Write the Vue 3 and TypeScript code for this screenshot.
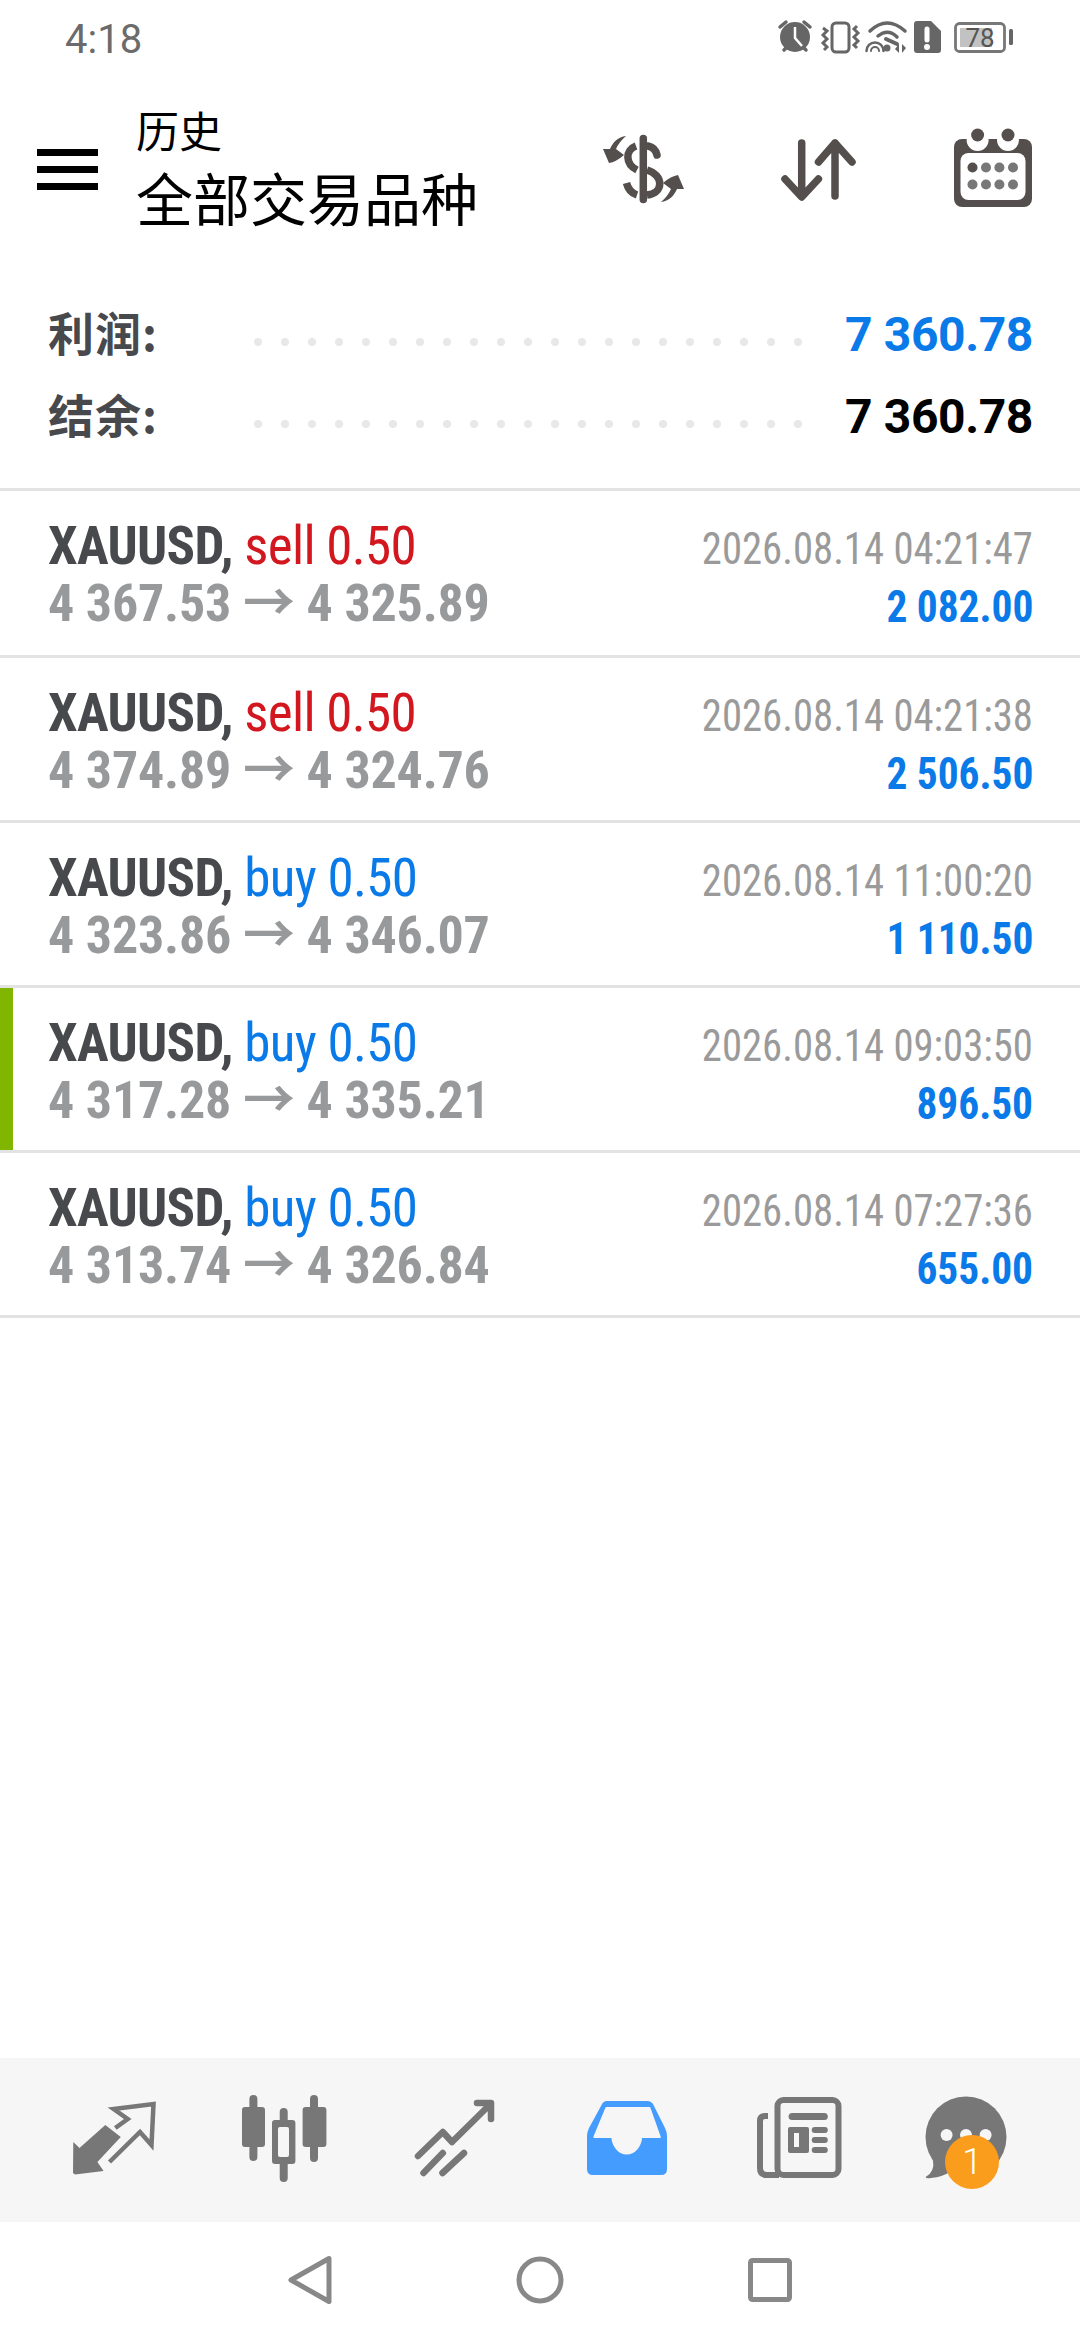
<script setup lang="ts">
interface Trade {
  side: 'sell' | 'buy'
  open: string
  close: string
  time: string
  profit: string
  marked?: boolean
}
const trades: Trade[] = [
  { side: 'sell', open: '4 367.53', close: '4 325.89', time: '2026.08.14 04:21:47', profit: '2 082.00' },
  { side: 'sell', open: '4 374.89', close: '4 324.76', time: '2026.08.14 04:21:38', profit: '2 506.50' },
  { side: 'buy', open: '4 323.86', close: '4 346.07', time: '2026.08.14 11:00:20', profit: '1 110.50' },
  { side: 'buy', open: '4 317.28', close: '4 335.21', time: '2026.08.14 09:03:50', profit: '896.50', marked: true },
  { side: 'buy', open: '4 313.74', close: '4 326.84', time: '2026.08.14 07:27:36', profit: '655.00' }
]
const summary = [
  { label: '利润:', value: '7 360.78', cls: 'blue' },
  { label: '结余:', value: '7 360.78', cls: 'black' }
]
const dots = Array.from({ length: 21 }, (_, i) => i)
</script>

<template>
  <div class="page">
    <div class="status">
      <span class="clock">4:18</span>
      <svg class="status-icons" width="250" height="75" viewBox="770 0 250 75">
        <g fill="#666" stroke="none">
          <circle cx="795" cy="37" r="15" />
          <path d="M780 27l6-5M810 27l-6-5M784 50l3-3M806 50l-3-3" stroke="#666" stroke-width="3.5" stroke-linecap="round" fill="none" />
          <path d="M795 27v11l7 8" stroke="#fff" stroke-width="2.5" fill="none" />
        </g>
        <rect x="832" y="23" width="17" height="29" rx="4" fill="none" stroke="#666" stroke-width="3" />
        <path d="M823 28l4 3-4 4 4 4-4 4 4 4-3 3M857 26l-3 3 4 4-4 4 4 4-4 4 3 3" fill="none" stroke="#666" stroke-width="3" />
        <g fill="none" stroke="#666" stroke-width="3.5" stroke-linecap="round">
          <path d="M870 31q17-16 35 0" />
          <path d="M878 36q10-8 19 1" />
          <path d="M866.500 51a8.500 8.500 0 0 1 17 0" stroke-width="2.500" />
          <path d="M871 51a4 4 0 0 1 8 0" stroke-width="2" />
          <path d="M886 39l11 5" stroke-width="4" />
        </g>
        <circle cx="887" cy="48" r="3.5" fill="#666" />
        <path d="M899 44v9l-4-4zM902 44v9l4-5z" fill="#666" />
        <path d="M917 21h14l10 10v19a3 3 0 0 1-3 3h-21a3 3 0 0 1-3-3v-26a3 3 0 0 1 3-3z" fill="#666" />
        <path d="M927 29v11" stroke="#fff" stroke-width="5" stroke-linecap="round" />
        <circle cx="927" cy="47" r="3" fill="#fff" />
        <rect x="955.5" y="23.5" width="49" height="28" rx="4" fill="#fff" stroke="#777" stroke-width="2.8" />
        <rect x="960" y="28" width="32" height="19" fill="#c2c2c2" />
        <text x="980" y="46.500" class="batt" text-anchor="middle">78</text>
        <rect x="1009" y="29" width="4" height="16" rx="1.5" fill="#666" />
      </svg>
    </div>

    <header class="head">
      <div class="burger"><i></i><i></i><i></i></div>
      <div class="titles">
        <div class="t1">历史</div>
        <div class="t2">全部交易品种</div>
      </div>
      <div class="head-icons">
        <svg width="100" height="130" viewBox="592 105 100 130">
          <path d="M625 136C617 137 612 142 609 149L602 149 608 163Q615 162 623 155L615 149Q618 142 625 136Z" fill="#544f4d" />
          <path d="M660 202C668 201 673 196 676 189L683 189 677 175Q670 176 662 183L670 189Q667 196 660 202Z" fill="#544f4d" />
          <g fill="none" stroke="#544f4d">
            <path d="M642.300 138.500V199.500" stroke-width="7.500" stroke-linecap="round" />
            <path d="M635 146C624 150 624 164 636 170" stroke-width="7.500" />
            <path d="M647 146C652 147 655 151 656 155" stroke-width="7.500" stroke-linecap="round" />
            <path d="M646 170C663 175 663 193 646 195" stroke-width="7.500" />
            <path d="M625.500 183C627 189 630 193 636 195" stroke-width="7.500" />
          </g>
        </svg>
        <svg width="100" height="130" viewBox="767 105 100 130">
          <g fill="none" stroke="#544f4d" stroke-width="7.500" stroke-linecap="round" stroke-linejoin="round">
            <path d="M800.700 143V196M784 179l16.700 18 16.700-18" />
            <path d="M834 196V143M817.500 162L834 143l17 19" />
          </g>
        </svg>
        <svg width="100" height="130" viewBox="941 105 100 130">
          <rect x="952" y="139" width="78" height="68" rx="8" fill="#544f4d" />
          <rect x="958.500" y="153" width="65" height="47" rx="8" fill="#fff" />
          <circle cx="975.600" cy="140" r="11" fill="#fff" />
          <circle cx="1006" cy="140" r="11" fill="#fff" />
          <circle cx="975.600" cy="135" r="6.500" fill="#544f4d" />
          <circle cx="1006" cy="135" r="6.500" fill="#544f4d" />
          <g fill="#777">
            <circle cx="970.500" cy="167.500" r="5" fill="#544f4d" />
            <circle cx="984" cy="167.500" r="5" />
            <circle cx="997.400" cy="167.500" r="5" />
            <circle cx="1011" cy="167.500" r="5" />
            <circle cx="970.500" cy="184.500" r="5" />
            <circle cx="984" cy="184.500" r="5" />
            <circle cx="997.400" cy="184.500" r="5" />
            <circle cx="1011" cy="184.500" r="5" />
          </g>
        </svg>
      </div>
    </header>

    <section class="summary">
      <div v-for="s in summary" :key="s.label + s.cls" class="sum-row">
        <span class="sum-label">{{ s.label }}</span>
        <span class="sum-dots"><i v-for="d in dots" :key="d"></i></span>
        <span class="sum-value" :class="s.cls">{{ s.value }}</span>
      </div>
    </section>

    <ul class="list">
      <li v-for="t in trades" :key="t.time" class="row" :class="{ marked: t.marked }">
        <div class="col-left">
          <div class="line1"><b>XAUUSD,</b> <span :class="t.side">{{ t.side }} 0.50</span></div>
          <div class="line2">{{ t.open }} → {{ t.close }}</div>
        </div>
        <div class="col-right">
          <div class="date">{{ t.time }}</div>
          <div class="profit">{{ t.profit }}</div>
        </div>
      </li>
    </ul>

    <div class="spacer"></div>

    <nav class="tabs">
      <svg width="100" height="164" viewBox="62 2058 100 164">
        <path d="M72.300 2142L78.500 2148 104.300 2125 119.800 2137 96.400 2162 102.600 2171 74 2174.500 72 2173Z" fill="#777" />
        <path d="M114.300 2128L126.700 2119 112.600 2109 152.500 2104 150.500 2145 139 2132 108.500 2162" fill="none" stroke="#777" stroke-width="4.500" />
      </svg>
      <svg width="100" height="164" viewBox="233 2058 100 164">
        <path d="M252.400 2099V2157M282.700 2112V2178M313 2099V2158" stroke="#777" stroke-width="8" stroke-linecap="round" />
        <rect x="241" y="2107" width="23" height="40" rx="3" fill="#777" />
        <rect x="271" y="2120" width="23.400" height="44" rx="3" fill="#777" />
        <rect x="277" y="2127" width="11" height="30" rx="2" fill="#f6f6f6" />
        <rect x="301.600" y="2107" width="23.800" height="40" rx="3" fill="#777" />
      </svg>
      <svg width="100" height="164" viewBox="404 2058 100 164">
        <g fill="none" stroke="#777" stroke-width="6.500" stroke-linecap="round" stroke-linejoin="round">
          <path d="M417 2156L441.800 2132 451 2142 489.500 2104M476 2103H490V2119" />
          <path d="M422.500 2173L441.800 2153M441.500 2173L463 2153" />
        </g>
      </svg>
      <svg width="100" height="164" viewBox="576 2058 100 164">
        <path d="M606 2101H646Q651 2101 653 2106L664 2128Q666 2132 666 2136V2169Q666 2175 660 2175H592Q586 2175 586 2169V2136Q586 2132 588 2128L600 2106Q602 2101 606 2101Z" fill="#459cff" />
        <path d="M605.400 2108H648.500L658.800 2137H640.200A14.500 18 0 0 1 611.300 2137H593.400Z" fill="#f6f6f6" stroke="#f6f6f6" stroke-width="2" stroke-linejoin="round" />
      </svg>
      <svg width="100" height="164" viewBox="747 2058 100 164">
        <rect x="776.500" y="2100" width="61" height="75" rx="6" fill="none" stroke="#777" stroke-width="6" />
        <path d="M767 2116H764Q759 2116 759 2121V2168Q759 2175 766 2175H778" fill="none" stroke="#777" stroke-width="6" />
        <rect x="787.600" y="2113" width="39.200" height="7" rx="3.500" fill="#777" />
        <path fill-rule="evenodd" d="M789 2127H806Q808 2127 808 2129V2151Q808 2153 806 2153H789Q787 2153 787 2151V2129Q787 2127 789 2127ZM793 2133V2147H798V2133Z" fill="#777" />
        <rect x="810.700" y="2127" width="16.100" height="6" rx="3" fill="#777" />
        <rect x="810.700" y="2137" width="16.100" height="6" rx="3" fill="#777" />
        <rect x="810.700" y="2147" width="16.100" height="6" rx="3" fill="#777" />
      </svg>
      <div class="chat">
        <svg width="100" height="164" viewBox="918 2058 100 164">
          <circle cx="965" cy="2137" r="40.500" fill="#777" />
          <path d="M932 2160Q934 2172 924.600 2177Q925 2179 930 2178Q942 2177 950 2171Z" fill="#777" />
          <circle cx="945.600" cy="2135" r="6" fill="#f6f6f6" />
          <circle cx="965" cy="2135" r="6" fill="#f6f6f6" />
          <circle cx="984.600" cy="2135" r="6" fill="#f6f6f6" />
        </svg>
        <span class="badge">1</span>
      </div>
    </nav>

    <div class="sys">
      <svg width="60" height="60" viewBox="0 0 60 60"><path d="M11 30L49 8.500V51.500Z" fill="none" stroke="#888" stroke-width="5" stroke-linejoin="round" /></svg>
      <svg width="60" height="60" viewBox="0 0 60 60"><circle cx="30" cy="30" r="21" fill="none" stroke="#888" stroke-width="5" /></svg>
      <svg width="60" height="60" viewBox="0 0 60 60"><rect x="10.500" y="10.500" width="39" height="39" rx="2" fill="none" stroke="#888" stroke-width="5" /></svg>
    </div>
  </div>
</template>

<style scoped>
.page {
  width: 1080px;
  height: 2340px;
  display: flex;
  flex-direction: column;
  background: #fff;
  font-family: Roboto, "Noto Sans CJK SC", sans-serif;
  overflow: hidden;
}
.status {
  height: 75px;
  display: flex;
  justify-content: space-between;
  align-items: flex-start;
  padding: 0 60px 0 65px;
}
.clock {
  font-family: Roboto, sans-serif;
  font-size: 40px;
  line-height: 79px;
  color: #6b6b6b;
}
.batt {
  font-family: Roboto, sans-serif;
  font-size: 26px;
  fill: #555;
}
.head {
  height: 205px;
  display: flex;
  align-items: stretch;
}
.burger {
  width: 61px;
  margin: 74px 0 0 37px;
  display: flex;
  flex-direction: column;
  gap: 10.5px;
}
.burger i {
  display: block;
  height: 6.5px;
  background: #000;
}
.titles {
  margin-left: 38px;
  font-family: "Noto Sans CJK SC", sans-serif;
  color: #000;
  padding-top: 24px;
}
.t1 {
  font-size: 43px;
  line-height: 61px;
}
.t2 {
  font-size: 57px;
  line-height: 72px;
}
.head-icons {
  margin-left: auto;
  margin-right: 37px;
  display: flex;
  gap: 75px;
  padding-top: 30px;
}
.summary {
  height: 208px;
  padding: 0 47px 0 48px;
  border-bottom: 3px solid #e3e3e3;
}
.sum-row {
  height: 82px;
  display: flex;
  align-items: center;
  position: relative;
  top: 13px;
}
.sum-label {
  width: 206px;
  padding-bottom: 6px;
  font-family: "Noto Sans CJK SC", sans-serif;
  font-size: 46px;
  font-weight: 700;
  letter-spacing: 1px;
  color: #48494d;
}
.sum-dots {
  display: flex;
  gap: 19px;
  position: relative;
  top: 8px;
}
.sum-dots i {
  display: block;
  width: 8px;
  height: 8px;
  border-radius: 50%;
  background: #e8e8e8;
}
.sum-value {
  margin-left: auto;
  font-size: 48px;
  font-weight: 700;
  letter-spacing: -0.4px;
}
.blue { color: #0a7ae8; }
.black { color: #000; }
.list {
  list-style: none;
  margin: 0;
  padding: 0;
}
.row {
  height: 162px;
  border-bottom: 3px solid #e3e3e3;
  display: flex;
  justify-content: space-between;
  padding: 0 47px 0 48px;
  position: relative;
  font-stretch: 75%;
}
.row:first-child {
  height: 164px;
}
.row.marked::before {
  content: "";
  position: absolute;
  left: 0;
  top: 0;
  bottom: 0;
  width: 13px;
  background: #80b500;
}
.line1 {
  font-size: 53px;
  line-height: 60px;
  margin-top: 25px;
  letter-spacing: -0.7px;
}
.line1 b {
  color: #48494d;
  font-weight: 700;
}
.sell { color: #d2171f; }
.buy { color: #0a7ae8; }
.line2 {
  font-size: 52px;
  line-height: 56px;
  font-weight: 700;
  letter-spacing: -0.2px;
  color: #97999b;
}
.col-right {
  display: flex;
  flex-direction: column;
  align-items: flex-end;
}
.date {
  font-size: 44px;
  line-height: 54px;
  margin-top: 31px;
  color: #9a9a9a;
  transform: scaleX(0.925);
  transform-origin: right center;
}
.profit {
  font-size: 44px;
  line-height: 52px;
  margin-top: 5px;
  font-weight: 700;
  color: #0a7ae8;
  transform: scaleX(0.94);
  transform-origin: right center;
}
.spacer { flex: 1; }
.tabs {
  height: 164px;
  background: #f6f6f6;
  display: grid;
  grid-template-columns: repeat(6, 1fr);
  padding: 0 25px 0 27px;
  justify-items: center;
}
.chat {
  position: relative;
  width: 100px;
  height: 164px;
}
.chat svg { display: block; }
.badge {
  position: absolute;
  left: 26px;
  top: 77px;
  width: 54px;
  height: 54px;
  border-radius: 50%;
  background: #fb9d1c;
  color: #fff;
  font-size: 36px;
  font-weight: 300;
  line-height: 54px;
  text-align: center;
}
.sys {
  height: 118px;
  display: flex;
  align-items: center;
  justify-content: center;
  gap: 170px;
  padding-bottom: 2px;
  box-sizing: border-box;
}
</style>
